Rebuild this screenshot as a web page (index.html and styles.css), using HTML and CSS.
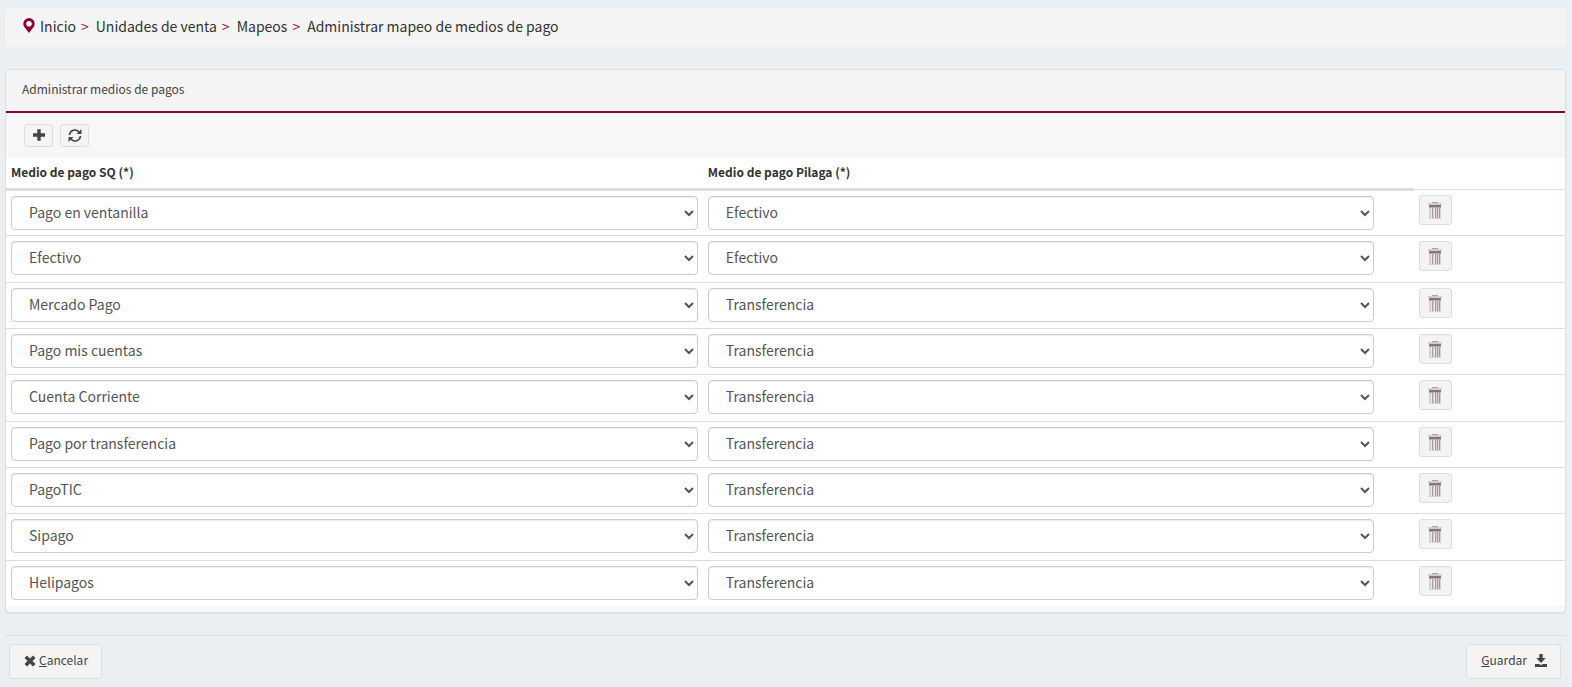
FILE: index.html
```html
<!DOCTYPE html>
<html lang="es">
<head>
<meta charset="utf-8">
<title>Administrar mapeo de medios de pago</title>
<link rel="stylesheet" href="styles.css">
</head>
<body>
<svg class="sprite" aria-hidden="true">
  <symbol id="trash" viewBox="0 0 14 17">
    <path fill="#aaa2a2" d="M4 0h6v1H4z"/>
    <path fill="#d3cece" d="M0 1h14v2H0z"/>
    <path fill="#857478" d="M1 3h12v2H1z"/>
    <path fill="#b5a9ab" d="M1 5h12v1H1z"/>
    <path fill="#d8d2d2" d="M1 6h12v11H1z"/>
    <path fill="#a59b9c" d="M4 6h1v10H4zM7 6h1v10H7zM9 6h1v10H9zM11 6h1v10h-1z"/>
    <path fill="#ece8e8" d="M3 6h1v10H3zM6 6h1v10H6z"/>
  </symbol>
</svg>
<nav class="breadcrumb" aria-label="Ruta">
  <svg class="pin" viewBox="0 0 12 15"><path fill="#8a0039" fill-rule="evenodd" d="M6 0a5.700 5.700 0 0 1 5.700 5.700c0 1.100-.3 1.900-.7 2.700L6 15 1 8.400C.6 7.600.3 6.800.3 5.700A5.700 5.700 0 0 1 6 0zM6 2.900a2.800 2.800 0 1 0 0 5.600 2.800 2.800 0 0 0 0-5.600z"/></svg>
  <ol class="crumbs">
    <li><a href="#">Inicio</a></li>
    <li><a href="#">Unidades de venta</a></li>
    <li><a href="#">Mapeos</a></li>
    <li><a href="#">Administrar mapeo de medios de pago</a></li>
  </ol>
</nav>
<main>
  <section class="panel">
    <h1 class="panel-title">Administrar medios de pagos</h1>
    <div class="toolbar">
      <button class="btn tool" type="button" aria-label="Agregar"><svg class="icon-plus" viewBox="0 0 12 12"><path fill="#444" d="M4.300.3h3.400v4H12v3.400H7.700v4H4.300v-4H0V4.300h4.300z"/></svg></button>
      <button class="btn tool" type="button" aria-label="Actualizar"><svg class="icon-refresh" viewBox="0 0 14 13" fill="none" stroke="#444" stroke-width="1.600"><path d="M1.500 6A5.400 5.400 0 0 1 11 3M12.500 7A5.400 5.400 0 0 1 3 10"/><path fill="#444" stroke="none" d="M13.500 0v5H8.500zM.5 13V8h5z"/></svg></button>
    </div>
    <table class="grid">
      <thead><tr><th class="col-sq">Medio de pago SQ (*)</th><th class="col-pilaga">Medio de pago Pilaga (*)</th><td class="col-action"></td></tr></thead>
      <tbody>
        <tr><td><select class="field" aria-label="Medio de pago SQ"><option>Pago en ventanilla</option></select></td><td><select class="field narrow" aria-label="Medio de pago Pilaga"><option>Efectivo</option></select></td><td class="action"><button class="btn delete" type="button" aria-label="Eliminar"><svg class="icon-trash"><use href="#trash"/></svg></button></td></tr>
        <tr><td><select class="field" aria-label="Medio de pago SQ"><option>Efectivo</option></select></td><td><select class="field narrow" aria-label="Medio de pago Pilaga"><option>Efectivo</option></select></td><td class="action"><button class="btn delete" type="button" aria-label="Eliminar"><svg class="icon-trash"><use href="#trash"/></svg></button></td></tr>
        <tr><td><select class="field" aria-label="Medio de pago SQ"><option>Mercado Pago</option></select></td><td><select class="field narrow" aria-label="Medio de pago Pilaga"><option>Transferencia</option></select></td><td class="action"><button class="btn delete" type="button" aria-label="Eliminar"><svg class="icon-trash"><use href="#trash"/></svg></button></td></tr>
        <tr><td><select class="field" aria-label="Medio de pago SQ"><option>Pago mis cuentas</option></select></td><td><select class="field narrow" aria-label="Medio de pago Pilaga"><option>Transferencia</option></select></td><td class="action"><button class="btn delete" type="button" aria-label="Eliminar"><svg class="icon-trash"><use href="#trash"/></svg></button></td></tr>
        <tr><td><select class="field" aria-label="Medio de pago SQ"><option>Cuenta Corriente</option></select></td><td><select class="field narrow" aria-label="Medio de pago Pilaga"><option>Transferencia</option></select></td><td class="action"><button class="btn delete" type="button" aria-label="Eliminar"><svg class="icon-trash"><use href="#trash"/></svg></button></td></tr>
        <tr><td><select class="field" aria-label="Medio de pago SQ"><option>Pago por transferencia</option></select></td><td><select class="field narrow" aria-label="Medio de pago Pilaga"><option>Transferencia</option></select></td><td class="action"><button class="btn delete" type="button" aria-label="Eliminar"><svg class="icon-trash"><use href="#trash"/></svg></button></td></tr>
        <tr><td><select class="field" aria-label="Medio de pago SQ"><option>PagoTIC</option></select></td><td><select class="field narrow" aria-label="Medio de pago Pilaga"><option>Transferencia</option></select></td><td class="action"><button class="btn delete" type="button" aria-label="Eliminar"><svg class="icon-trash"><use href="#trash"/></svg></button></td></tr>
        <tr><td><select class="field" aria-label="Medio de pago SQ"><option>Sipago</option></select></td><td><select class="field narrow" aria-label="Medio de pago Pilaga"><option>Transferencia</option></select></td><td class="action"><button class="btn delete" type="button" aria-label="Eliminar"><svg class="icon-trash"><use href="#trash"/></svg></button></td></tr>
        <tr><td><select class="field" aria-label="Medio de pago SQ"><option>Helipagos</option></select></td><td><select class="field narrow" aria-label="Medio de pago Pilaga"><option>Transferencia</option></select></td><td class="action"><button class="btn delete" type="button" aria-label="Eliminar"><svg class="icon-trash"><use href="#trash"/></svg></button></td></tr>
      </tbody>
    </table>
  </section>
</main>
<footer class="actions">
  <button class="btn large cancel" type="button"><svg class="icon-x" viewBox="0 0 12 12"><path fill="#444" d="M3 .5 6 3.500 9 .5 11.500 3l-3 3 3 3L9 11.500l-3-3-3 3L.5 9l3-3-3-3z"/></svg><span><u>C</u>ancelar</span></button>
  <button class="btn large save" type="button"><span><u>G</u>uardar</span><svg class="icon-save" viewBox="0 0 12 13"><path fill="#444" d="M4.300 0h3.400v4h3L6 9 1.300 4h3zM0 10h4l2 1 2-1h4v3H0z"/></svg></button>
</footer>
</body>
</html>
```
FILE: styles.css
```css
* { box-sizing: border-box; }

body {
  margin: 0;
  padding: 8px 6px 8px 5px;
  background: #eaeff3;
  color: #444;
  font-family: "Noto Sans CJK SC", "Noto Sans", sans-serif;
  font-size: 14px;
  line-height: 20px;
}

.sprite { display: none; }
svg { display: block; }

.breadcrumb {
  display: flex;
  align-items: center;
  gap: 5px;
  height: 39px;
  padding: 0 18px 4px;
  border-radius: 4px;
  background: #f4f4f4;
}

.pin { width: 12px; height: 15px; }

.crumbs {
  display: flex;
  margin: 0;
  padding: 0;
  list-style: none;
}

.crumbs a { color: #333; text-decoration: none; }

.crumbs li:not(:last-child)::after {
  content: ">";
  padding: 0 7px 0 5px;
  color: #9c1045;
}

.panel {
  margin-top: 22px;
  padding-bottom: 6px;
  border: 1px solid #dcdfe0;
  border-radius: 4px;
  background: #f7f7f7;
  box-shadow: 0 1px 1px rgba(0, 0, 0, .05);
}

.panel-title {
  margin: 0;
  padding: 9px 16px 12px;
  border-bottom: 2px solid #8a0039;
  border-radius: 3px 3px 0 0;
  background: #f4f4f4;
  font-size: 12px;
  font-weight: 400;
}

.toolbar {
  display: flex;
  gap: 7px;
  padding: 11px 18px;
}

.btn {
  display: flex;
  align-items: center;
  justify-content: center;
  padding: 0;
  border: 1px solid #ddd;
  border-radius: 3px;
  background: #f4f4f4;
  color: #444;
  font: inherit;
  font-size: 12px;
}

.tool { width: 29px; height: 23px; padding-bottom: 1px; }
.icon-plus { width: 12px; height: 12px; }
.icon-refresh { width: 14px; height: 13px; }

.grid {
  width: 100%;
  table-layout: fixed;
  border-collapse: collapse;
  background: #fff;
}

.col-sq { width: 44.7%; }
.col-pilaga { width: 45.6%; }
.col-action { width: 9.7%; }

.grid th {
  height: 31px;
  padding: 4px 5px;
  border-bottom: 3px solid #ddd;
  color: #333;
  font-size: 12px;
  font-weight: 700;
  text-align: left;
  vertical-align: top;
}

.grid tbody tr { height: 46px; }
.grid tbody tr:nth-child(3n + 2) { height: 47px; }

.grid tbody td {
  padding: 5px;
  border-top: 1px solid #ddd;
  vertical-align: top;
}

.field {
  display: block;
  width: 100%;
  height: 34px;
  padding: 0 12px 1px 13px;
  border: 1px solid #ccc;
  border-radius: 4px;
  background: #fff;
  box-shadow: inset 0 1px 1px rgba(0, 0, 0, .075);
  color: #555;
  font: inherit;
}

.narrow { width: 95%; }

.delete { width: 33px; height: 30px; padding-top: 2px; }
.icon-trash { width: 14px; height: 17px; }

.actions {
  display: flex;
  justify-content: space-between;
  margin-top: 22px;
  padding: 8px 5px 0 4px;
  border-top: 1px solid #dcdfe0;
}

.large { height: 35px; padding: 0 13px 3px 14px; }
.cancel { gap: 3px; }
.save { gap: 8px; }
.icon-x { width: 12px; height: 12px; margin-top: 2px; }
.icon-save { width: 12px; height: 13px; }
```
